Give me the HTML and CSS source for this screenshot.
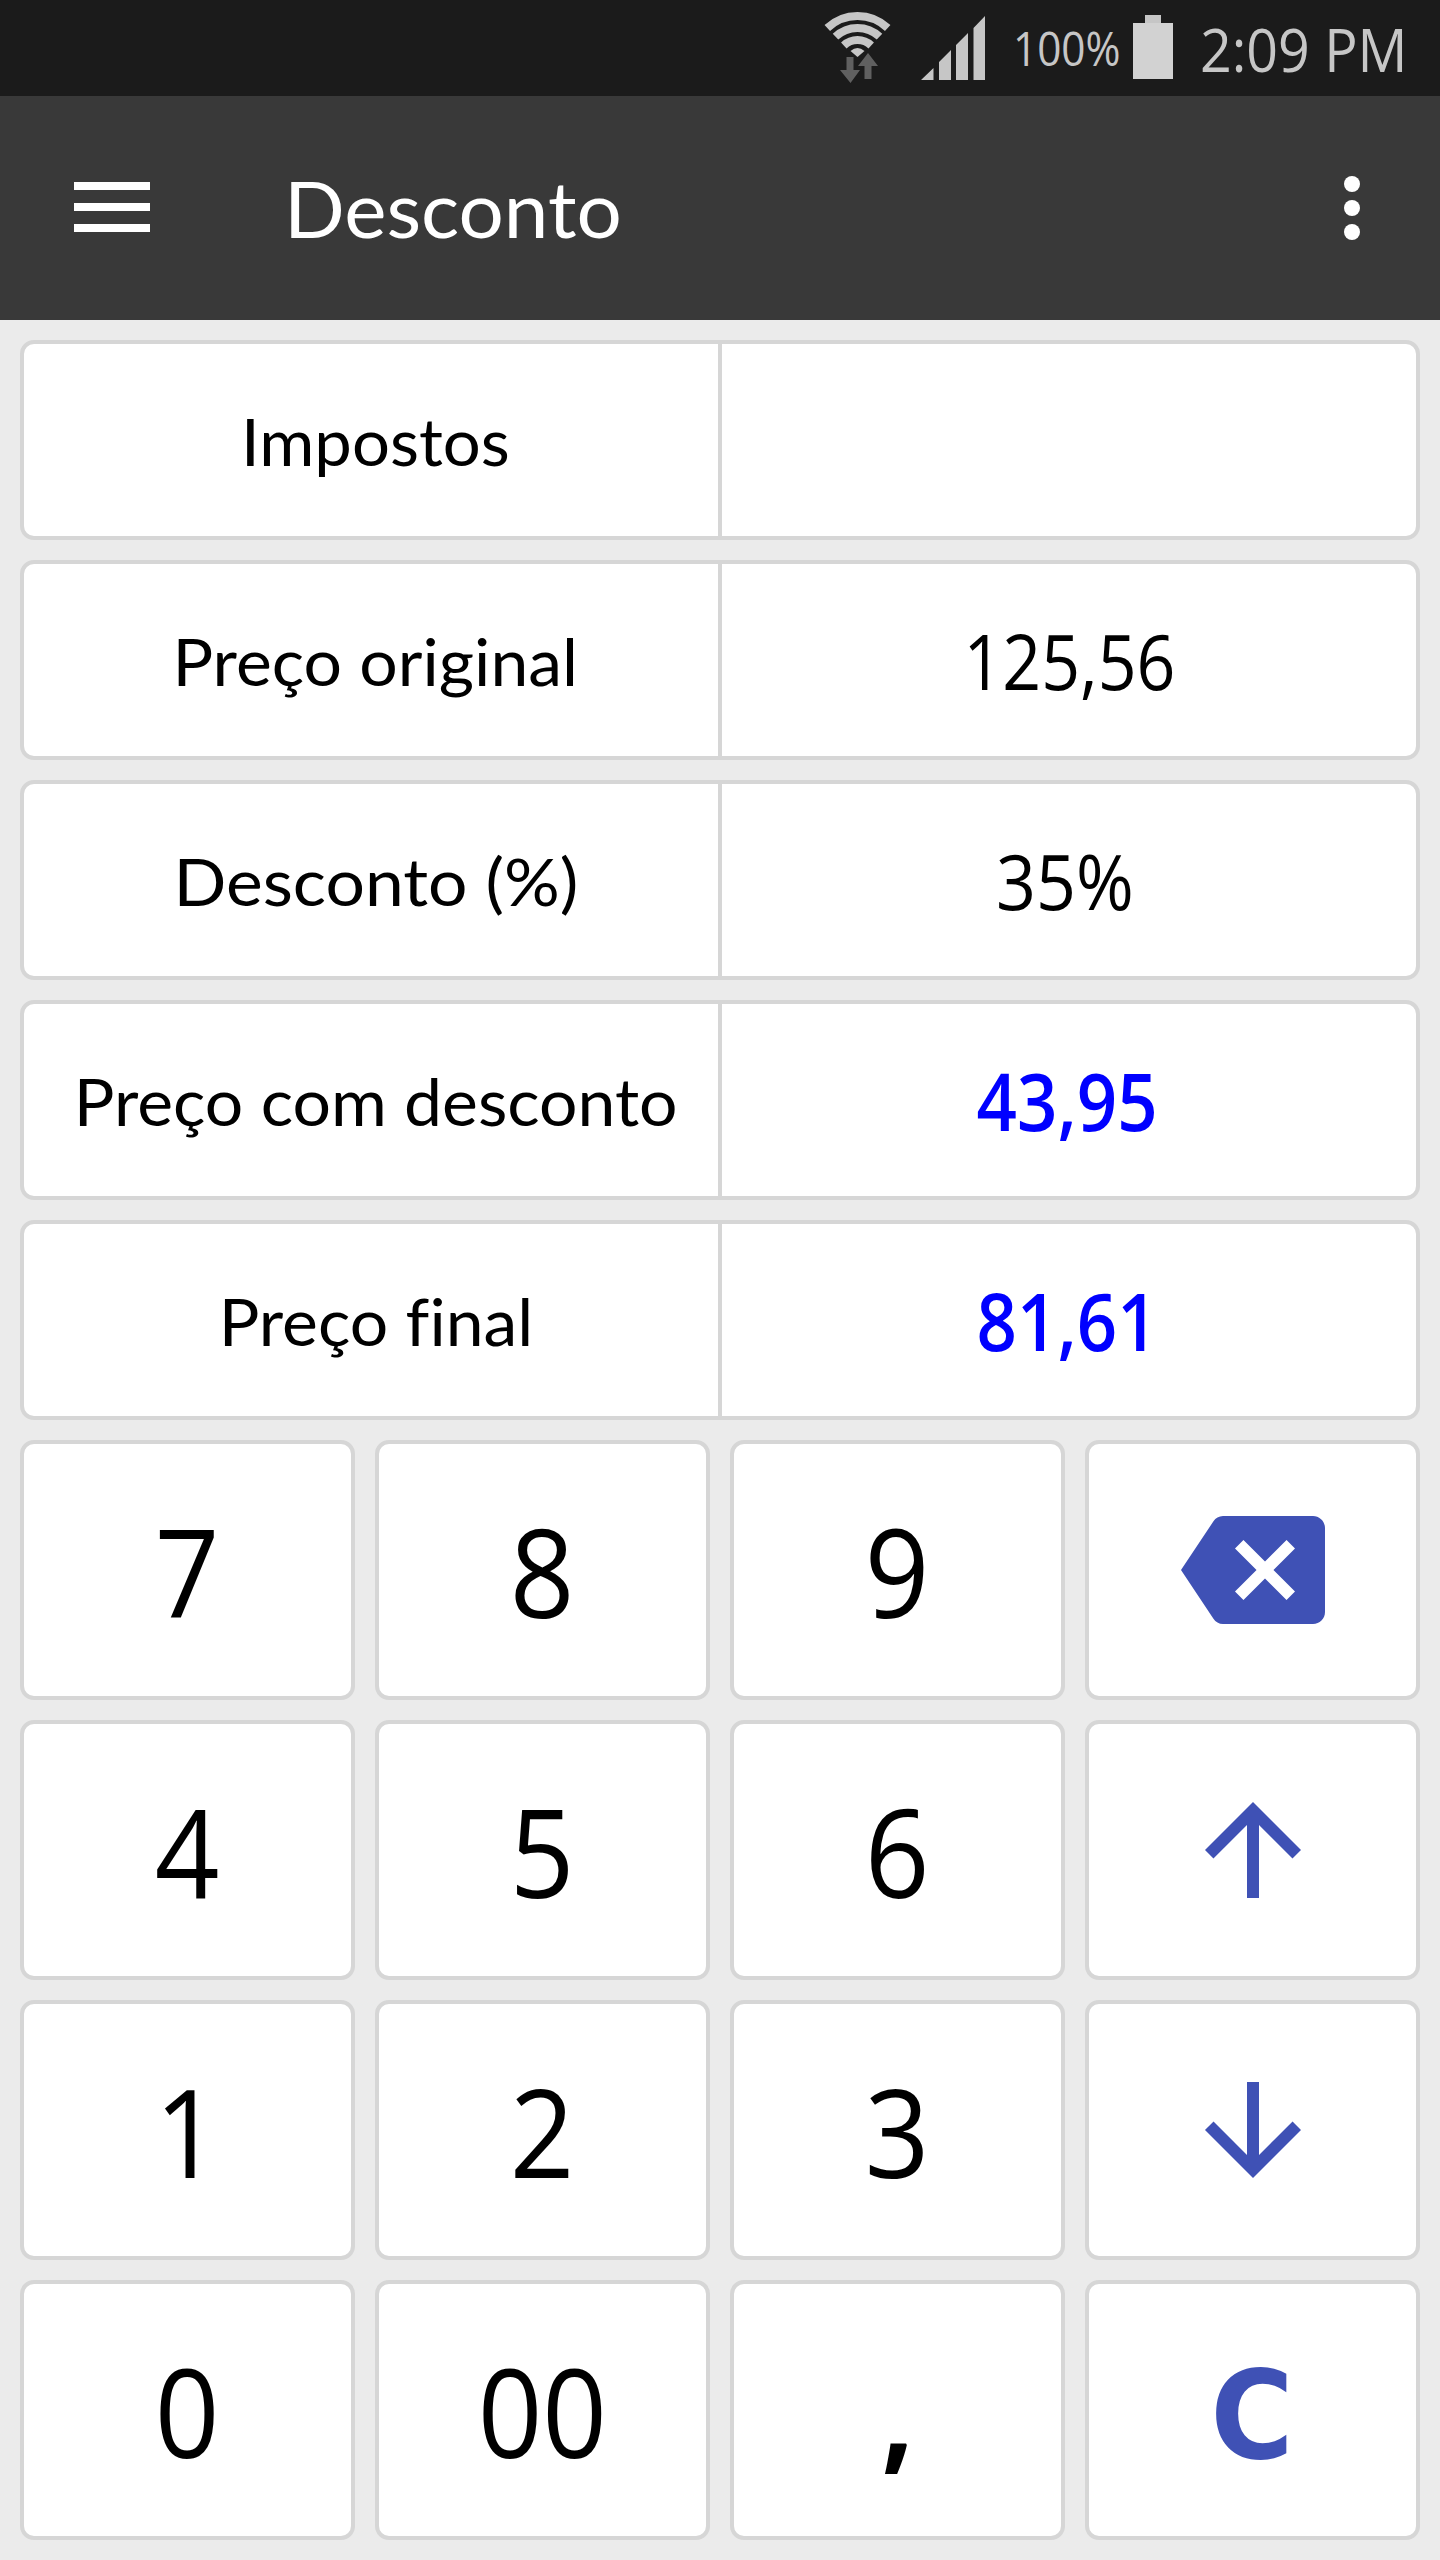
FILE: index.html
```html
<!DOCTYPE html>
<html lang="pt">
<head>
<meta charset="utf-8">
<title>Desconto</title>
<link rel="stylesheet" href="styles.css">
</head>

<body>
	<div class="status">
		<svg class="wifi" width="68" height="76" viewBox="823 10 68 76">
			<g fill="none" stroke="#c6c6c6" stroke-width="8">
				<path d="M827.3 28A44 44 0 0 1 887.7 28"/>
				<path d="M835.5 36.7A32 32 0 0 1 879.5 36.7"/>
				<path d="M843.8 45.5A20 20 0 0 1 871.2 45.5"/>
			</g>
			<path fill="#c6c6c6" d="M850.5 51Q857.5 45 864.5 51L857.5 57z"/>
			<path fill="#606060" d="M846.5 57h7v13h6.500l-9.500 13l-10.500-13h6.500zM868 53l10 13h-6.500v13h-7v-13h-6.500z"/>
		</svg>
		<svg class="signal" width="64" height="64" viewBox="921 16 64 64">
			<path fill="#c6c6c6" d="M921 80L933.5 68V80zM939 80V62L951 50V80zM956 80V45L968 33V80zM973.5 80V28L985 16V80z"/>
		</svg>
		<span class="percent">100%</span>
		<svg class="battery" width="40" height="64" viewBox="0 0 40 64">
			<path fill="#c6c6c6" d="M12 0h16v8H12z"/>
			<path fill="#d2d2d2" d="M0 8h40v56H0z"/>
		</svg>
		<span class="clock">2:09 PM</span>
	</div>

	<div class="bar">
		<svg class="menu" width="76" height="50" viewBox="0 0 76 50"><path fill="#fff" d="M0 0h76v8H0zM0 21h76v8H0zM0 42h76v8H0z"/></svg>
		<h1>Desconto</h1>
		<svg class="more" width="16" height="64" viewBox="0 0 16 64"><g fill="#fff"><circle cx="8" cy="8" r="8"/><circle cx="8" cy="32" r="8"/><circle cx="8" cy="56" r="8"/></g></svg>
	</div>

	<div class="rows">
		<div class="row"><div class="label"><span class="short">Impostos</span></div><div class="value"></div></div>
		<div class="row"><div class="label"><span>Preço original</span></div><div class="value"><span>125,56</span></div></div>
		<div class="row"><div class="label"><span class="wide">Desconto (%)</span></div><div class="value"><span class="rate">35%</span></div></div>
		<div class="row"><div class="label"><span>Preço com desconto</span></div><div class="value result"><span>43,95</span></div></div>
		<div class="row"><div class="label"><span>Preço final</span></div><div class="value result"><span>81,61</span></div></div>
	</div>

	<div class="keys">
		<div class="key"><span>7</span></div>
		<div class="key"><span>8</span></div>
		<div class="key"><span>9</span></div>
		<div class="key"><svg width="144" height="144" viewBox="0 0 24 24"><path fill="#3f51b5" d="M22 3H7c-.69 0-1.23.35-1.59.88L0 12l5.41 8.11c.36.53.9.89 1.59.89h15c1.1 0 2-.9 2-2V5c0-1.1-.9-2-2-2zm-3 12.59L17.59 17 14 13.41 10.41 17 9 15.59 12.59 12 9 8.41 10.41 7 14 10.59 17.59 7 19 8.41 15.41 12 19 15.59z"/></svg></div>
		<div class="key"><span>4</span></div>
		<div class="key"><span>5</span></div>
		<div class="key"><span>6</span></div>
		<div class="key"><svg width="144" height="144" viewBox="0 0 24 24"><path fill="#3f51b5" d="M4 12l1.41 1.41L11 7.83V20h2V7.83l5.58 5.59L20 12l-8-8-8 8z"/></svg></div>
		<div class="key"><span>1</span></div>
		<div class="key"><span>2</span></div>
		<div class="key"><span>3</span></div>
		<div class="key"><svg width="144" height="144" viewBox="0 0 24 24"><path fill="#3f51b5" d="M20 12l-1.41-1.41L13 16.17V4h-2v12.17l-5.58-5.59L4 12l8 8 8-8z"/></svg></div>
		<div class="key"><span>0</span></div>
		<div class="key"><span>00</span></div>
		<div class="key comma"><span>,</span></div>
		<div class="key clear"><span>C</span></div>
	</div>
</body>
</html>
```

FILE: styles.css
```css
body { margin: 0; width: 1440px; height: 2560px; background: #ebebeb; font-family: Lato, sans-serif; color: #000; overflow: hidden;}
svg { display: block; flex: none;}

.status { display: flex; box-sizing: border-box; height: 96px; padding-left: 823px; background: #1b1b1b; color: #c6c6c6; font-family: "Open Sans", sans-serif; white-space: nowrap;}
.wifi { margin-top: 10px;}
.signal { margin: 16px 0 0 30px;}
.percent { width: 106px; margin-left: 28px; font-size: 47px; line-height: 96px; transform: scaleX(.9); transform-origin: left;}
.battery { margin: 15px 0 0 14px;}
.clock { margin-left: 27px; font-size: 61px; line-height: 98px; transform: scaleX(.91); transform-origin: left;}

.bar { display: flex; align-items: center; box-sizing: border-box; height: 224px; padding: 0 80px 0 74px; background: #393939; color: #fff;}
.bar h1 { flex: 1; margin: 0 0 0 134px; font-size: 78px; font-weight: normal; line-height: 226px; transform: scaleX(1.025); transform-origin: left;}
.menu { margin-top: -2px;}

.rows { padding: 20px 20px 0;}
.row { display: flex; box-sizing: border-box; height: 200px; margin-bottom: 20px; border: 4px solid #d6d6d6; border-radius: 14px; background: #fff;}
.label, .value { display: flex; align-items: center; justify-content: center; width: 694px; white-space: nowrap;}
.label { box-sizing: border-box; padding-left: 9px; font-size: 66px; font-variant-ligatures: none;}
.label span { transform: scaleX(1.028);}
.label .short { transform: scaleX(1.015);}
.label .wide { transform: scaleX(1.055);}
.value { border-left: 4px solid #d6d6d6; font-family: "Open Sans", sans-serif; font-size: 76px;}
.value span { transform: scaleX(.895);}
.value .rate { margin-right: 8px; transform: scaleX(.92);}
.result { color: #00f; font-size: 79px; font-weight: 600;}
.result span { margin-right: 4px;}

.keys { display: grid; grid-template-columns: repeat(4, 335px); grid-auto-rows: 260px; gap: 20px; padding: 0 20px;}
.key { display: flex; align-items: center; justify-content: center; box-sizing: border-box; border: 4px solid #d6d6d6; border-radius: 14px; background: #fff; font-family: "Open Sans", sans-serif; font-size: 123px; line-height: 1;}
.key span { transform: scaleX(.92);}
.comma { font-weight: bold;}
.clear { padding-top: 11px; color: #3f51b5; font-family: "DejaVu Sans", sans-serif; font-size: 123px; font-weight: bold;}
```
